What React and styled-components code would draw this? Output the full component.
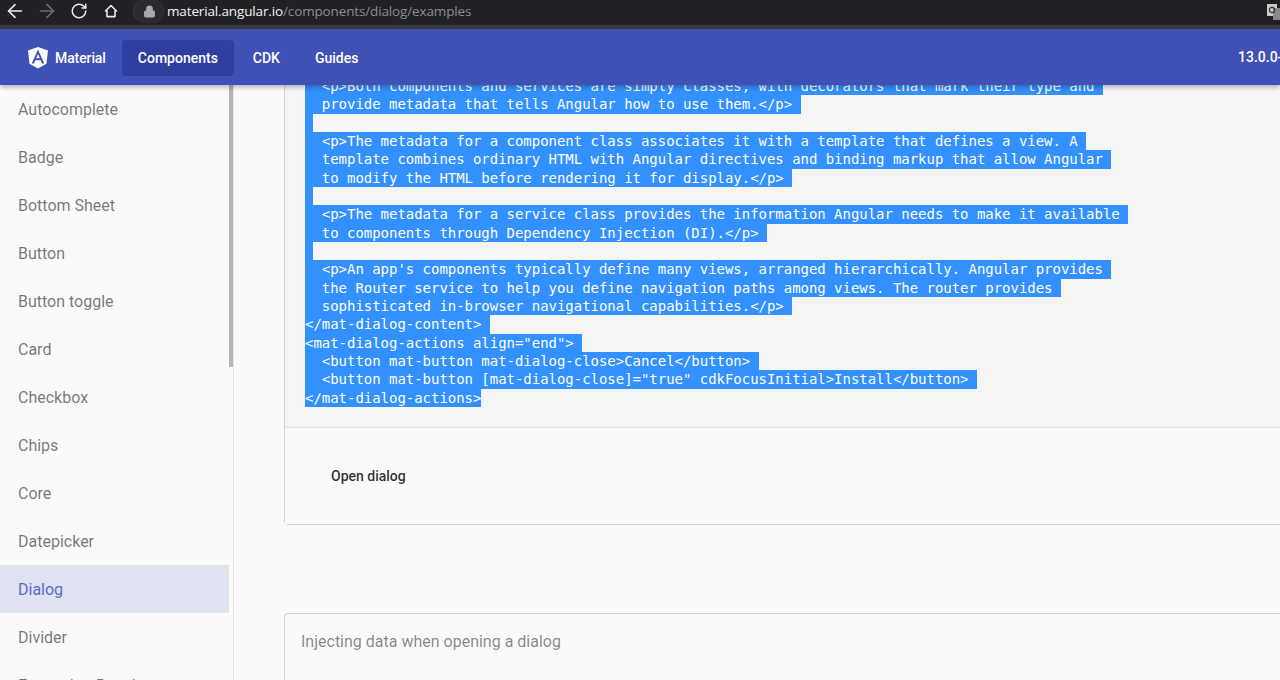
import React from "react";
import styled, { createGlobalStyle } from "styled-components";
import { ArrowLeft, ArrowRight, RotateCw, Lock } from "lucide-react";

const GlobalStyle = createGlobalStyle`
  html, body {
    margin: 0;
    height: 680px;
    overflow: hidden;
    background: #fafafa;
    font-family: Roboto, "Liberation Sans", sans-serif;
  }
`;

const Page = styled.div`
  width: 1280px;
  height: 680px;
  display: flex;
  flex-direction: column;
  overflow: hidden;
`;

const BrowserBar = styled.div`
  flex: none;
  height: 29px;
  box-sizing: border-box;
  background: #202124;
  border-bottom: 4px solid #393b40;
  display: flex;
  align-items: center;
  gap: 10px;
  padding: 0 0 3px 3.5px;
  position: relative;
`;

const NavIcon = styled.span`
  width: 22px;
  height: 22px;
  display: flex;
  align-items: center;
  justify-content: center;
  color: ${(p) => (p.$off ? "#6c6e72" : "#e8eaed")};
`;

const UrlBar = styled.div`
  margin-left: 1.5px;
  height: 22px;
  display: flex;
  align-items: center;
  flex: 1;
  font-family: "Open Sans", sans-serif;
  font-size: 13.5px;
  letter-spacing: -0.14px;
`;

const LockPill = styled.span`
  width: 32px;
  height: 24px;
  border-radius: 12px;
  border-left: 1px solid #3a3b3e;
  background: #2a2b2e;
  display: flex;
  align-items: center;
  justify-content: center;
  color: #a8aaad;
  margin-right: 2px;
  box-sizing: border-box;
`;

const Host = styled.span`
  color: #f1f3f4;
`;

const UrlPath = styled.span`
  color: #8a8c90;
`;

const TranslateIcon = styled.svg`
  position: absolute;
  left: 1267px;
  top: 4px;
`;

const Toolbar = styled.header`
  flex: none;
  height: 56px;
  box-sizing: border-box;
  padding: 2px 0 0 28px;
  background: #3f51b5;
  color: #fff;
  display: flex;
  align-items: center;
  gap: 3px;
  position: relative;
  z-index: 2;
  box-shadow: 0 2px 5px rgba(0, 0, 0, 0.3);
  font-size: 14px;
  font-weight: 500;
`;

const Brand = styled.div`
  display: flex;
  align-items: center;
  gap: 7px;
  margin-right: 13px;
  letter-spacing: -0.1px;
`;

const NavButton = styled.div`
  height: 36px;
  line-height: 36px;
  padding: 0 16px;
  border-radius: 4px;
  background: ${(p) => (p.$active ? "#303f9f" : "transparent")};
`;

const Version = styled.div`
  position: absolute;
  left: 1238px;
  top: 20px;
  white-space: nowrap;
`;

const Body = styled.div`
  flex: 1;
  display: flex;
  min-height: 0;
`;

const Sidebar = styled.nav`
  flex: none;
  width: 234px;
  box-sizing: border-box;
  border-right: 1px solid #e5e5e5;
  position: relative;
  overflow: hidden;
`;

const SideItem = styled.div`
  width: 229px;
  height: 48px;
  line-height: 50px;
  padding-left: 18px;
  box-sizing: border-box;
  font-size: 16px;
  color: ${(p) => (p.$active ? "#5c6bc0" : "rgba(0, 0, 0, 0.54)")};
  background: ${(p) => (p.$active ? "#dfe2f1" : "transparent")};
`;

const ScrollThumb = styled.div`
  position: absolute;
  left: 229px;
  top: 0;
  width: 4px;
  height: 282px;
  background: #b5b5b5;
`;

const Main = styled.main`
  flex: 1;
  min-width: 0;
  padding-left: 50px;
  overflow: hidden;
`;

const Card = styled.section`
  width: 1040px;
  border: 1px solid #d0d0d0;
  border-radius: 4px;
  box-sizing: border-box;
  margin-top: ${(p) => p.$top}px;
`;

const CodeBlock = styled.pre`
  margin: 0;
  padding: 20px;
  background: #f5f5f5;
  border-bottom: 1px solid #e0e0e0;
  font-family: "DejaVu Sans Mono", "Liberation Mono", monospace;
  font-size: 14px;
  line-height: 18.33px;
  letter-spacing: -0.03px;
  color: #fff;
`;

const CodeLine = styled.div`
  height: 18.33px;
`;

const Selected = styled.span`
  display: inline-block;
  height: 18.33px;
  background: #3390ff;
  vertical-align: top;
`;

const ExampleBody = styled.div`
  height: 96px;
  padding-left: 30px;
  display: flex;
  align-items: center;
  background: #fafafa;
`;

const FlatButton = styled.div`
  padding: 0 16px;
  font-size: 14px;
  font-weight: 500;
  color: rgba(0, 0, 0, 0.82);
`;

const CardTitle = styled.div`
  padding: 18px 16px 0;
  height: 100px;
  font-size: 16px;
  color: rgba(0, 0, 0, 0.48);
`;

const navItems = [
  "Autocomplete",
  "Badge",
  "Bottom Sheet",
  "Button",
  "Button toggle",
  "Card",
  "Checkbox",
  "Chips",
  "Core",
  "Datepicker",
  "Dialog",
  "Divider",
  "Expansion Panel",
];

const codeLines = [
  "  <p>Both components and services are simply classes, with decorators that mark their type and ",
  "  provide metadata that tells Angular how to use them.</p> ",
  " ",
  "  <p>The metadata for a component class associates it with a template that defines a view. A ",
  "  template combines ordinary HTML with Angular directives and binding markup that allow Angular ",
  "  to modify the HTML before rendering it for display.</p> ",
  " ",
  "  <p>The metadata for a service class provides the information Angular needs to make it available ",
  "  to components through Dependency Injection (DI).</p> ",
  " ",
  "  <p>An app's components typically define many views, arranged hierarchically. Angular provides ",
  "  the Router service to help you define navigation paths among views. The router provides ",
  "  sophisticated in-browser navigational capabilities.</p> ",
  "</mat-dialog-content> ",
  '<mat-dialog-actions align="end"> ',
  "  <button mat-button mat-dialog-close>Cancel</button> ",
  '  <button mat-button [mat-dialog-close]="true" cdkFocusInitial>Install</button> ',
  "</mat-dialog-actions>",
];

function AngularLogo() {
  return (
    <svg width="20" height="21.5" viewBox="31.9 30 186.2 200">
      <path fill="#fff" d="M125 30L31.9 63.2l14.2 123.1L125 230l78.9-43.7 14.2-123.1z" />
      <path
        fill="#3f51b5"
        d="M125 52.1L66.8 182.6h21.7l11.7-29.2h49.4l11.7 29.2h21.7L125 52.1zM142 135.4h-34l17-40.9 17 40.9z"
      />
    </svg>
  );
}

function HomeIcon() {
  return (
    <svg width="14" height="14" viewBox="0 0 14 14" fill="none" stroke="currentColor" strokeWidth="1.6">
      <path d="M7 1.5L12.5 7H11V12.6H3V7H1.5z" strokeLinejoin="round" />
    </svg>
  );
}

export default function App() {
  return (
    <Page>
      <GlobalStyle />
      <BrowserBar>
        <NavIcon><ArrowLeft size={22} strokeWidth={1.8} /></NavIcon>
        <NavIcon $off><ArrowRight size={22} strokeWidth={1.8} /></NavIcon>
        <NavIcon><RotateCw size={18} strokeWidth={2} /></NavIcon>
        <NavIcon><HomeIcon /></NavIcon>
        <UrlBar>
          <LockPill><Lock size={13} fill="#a8aaad" /></LockPill>
          <Host>material.angular.io</Host>
          <UrlPath>/components/dialog/examples</UrlPath>
        </UrlBar>
        <TranslateIcon width="14" height="16" viewBox="0 0 14 16">
          <rect x="0" y="0" width="10" height="12" fill="#c9c9c9" />
          <rect x="6" y="4" width="8" height="12" fill="#8a8a8a" />
          <circle cx="5" cy="6" r="2.6" fill="none" stroke="#333" strokeWidth="1.2" />
        </TranslateIcon>
      </BrowserBar>
      <Toolbar>
        <Brand>
          <AngularLogo />
          Material
        </Brand>
        <NavButton $active>Components</NavButton>
        <NavButton>CDK</NavButton>
        <NavButton>Guides</NavButton>
        <Version>13.0.0-</Version>
      </Toolbar>
      <Body>
        <Sidebar>
          {navItems.map((item) => (
            <SideItem key={item} $active={item === "Dialog"}>{item}</SideItem>
          ))}
          <ScrollThumb />
        </Sidebar>
        <Main>
          <Card $top={-29}>
            <CodeBlock>
              {codeLines.map((line, i) => (
                <CodeLine key={i}>
                  <Selected>{line}</Selected>
                </CodeLine>
              ))}
            </CodeBlock>
            <ExampleBody>
              <FlatButton>Open dialog</FlatButton>
            </ExampleBody>
          </Card>
          <Card $top={88}>
            <CardTitle>Injecting data when opening a dialog</CardTitle>
          </Card>
        </Main>
      </Body>
    </Page>
  );
}
